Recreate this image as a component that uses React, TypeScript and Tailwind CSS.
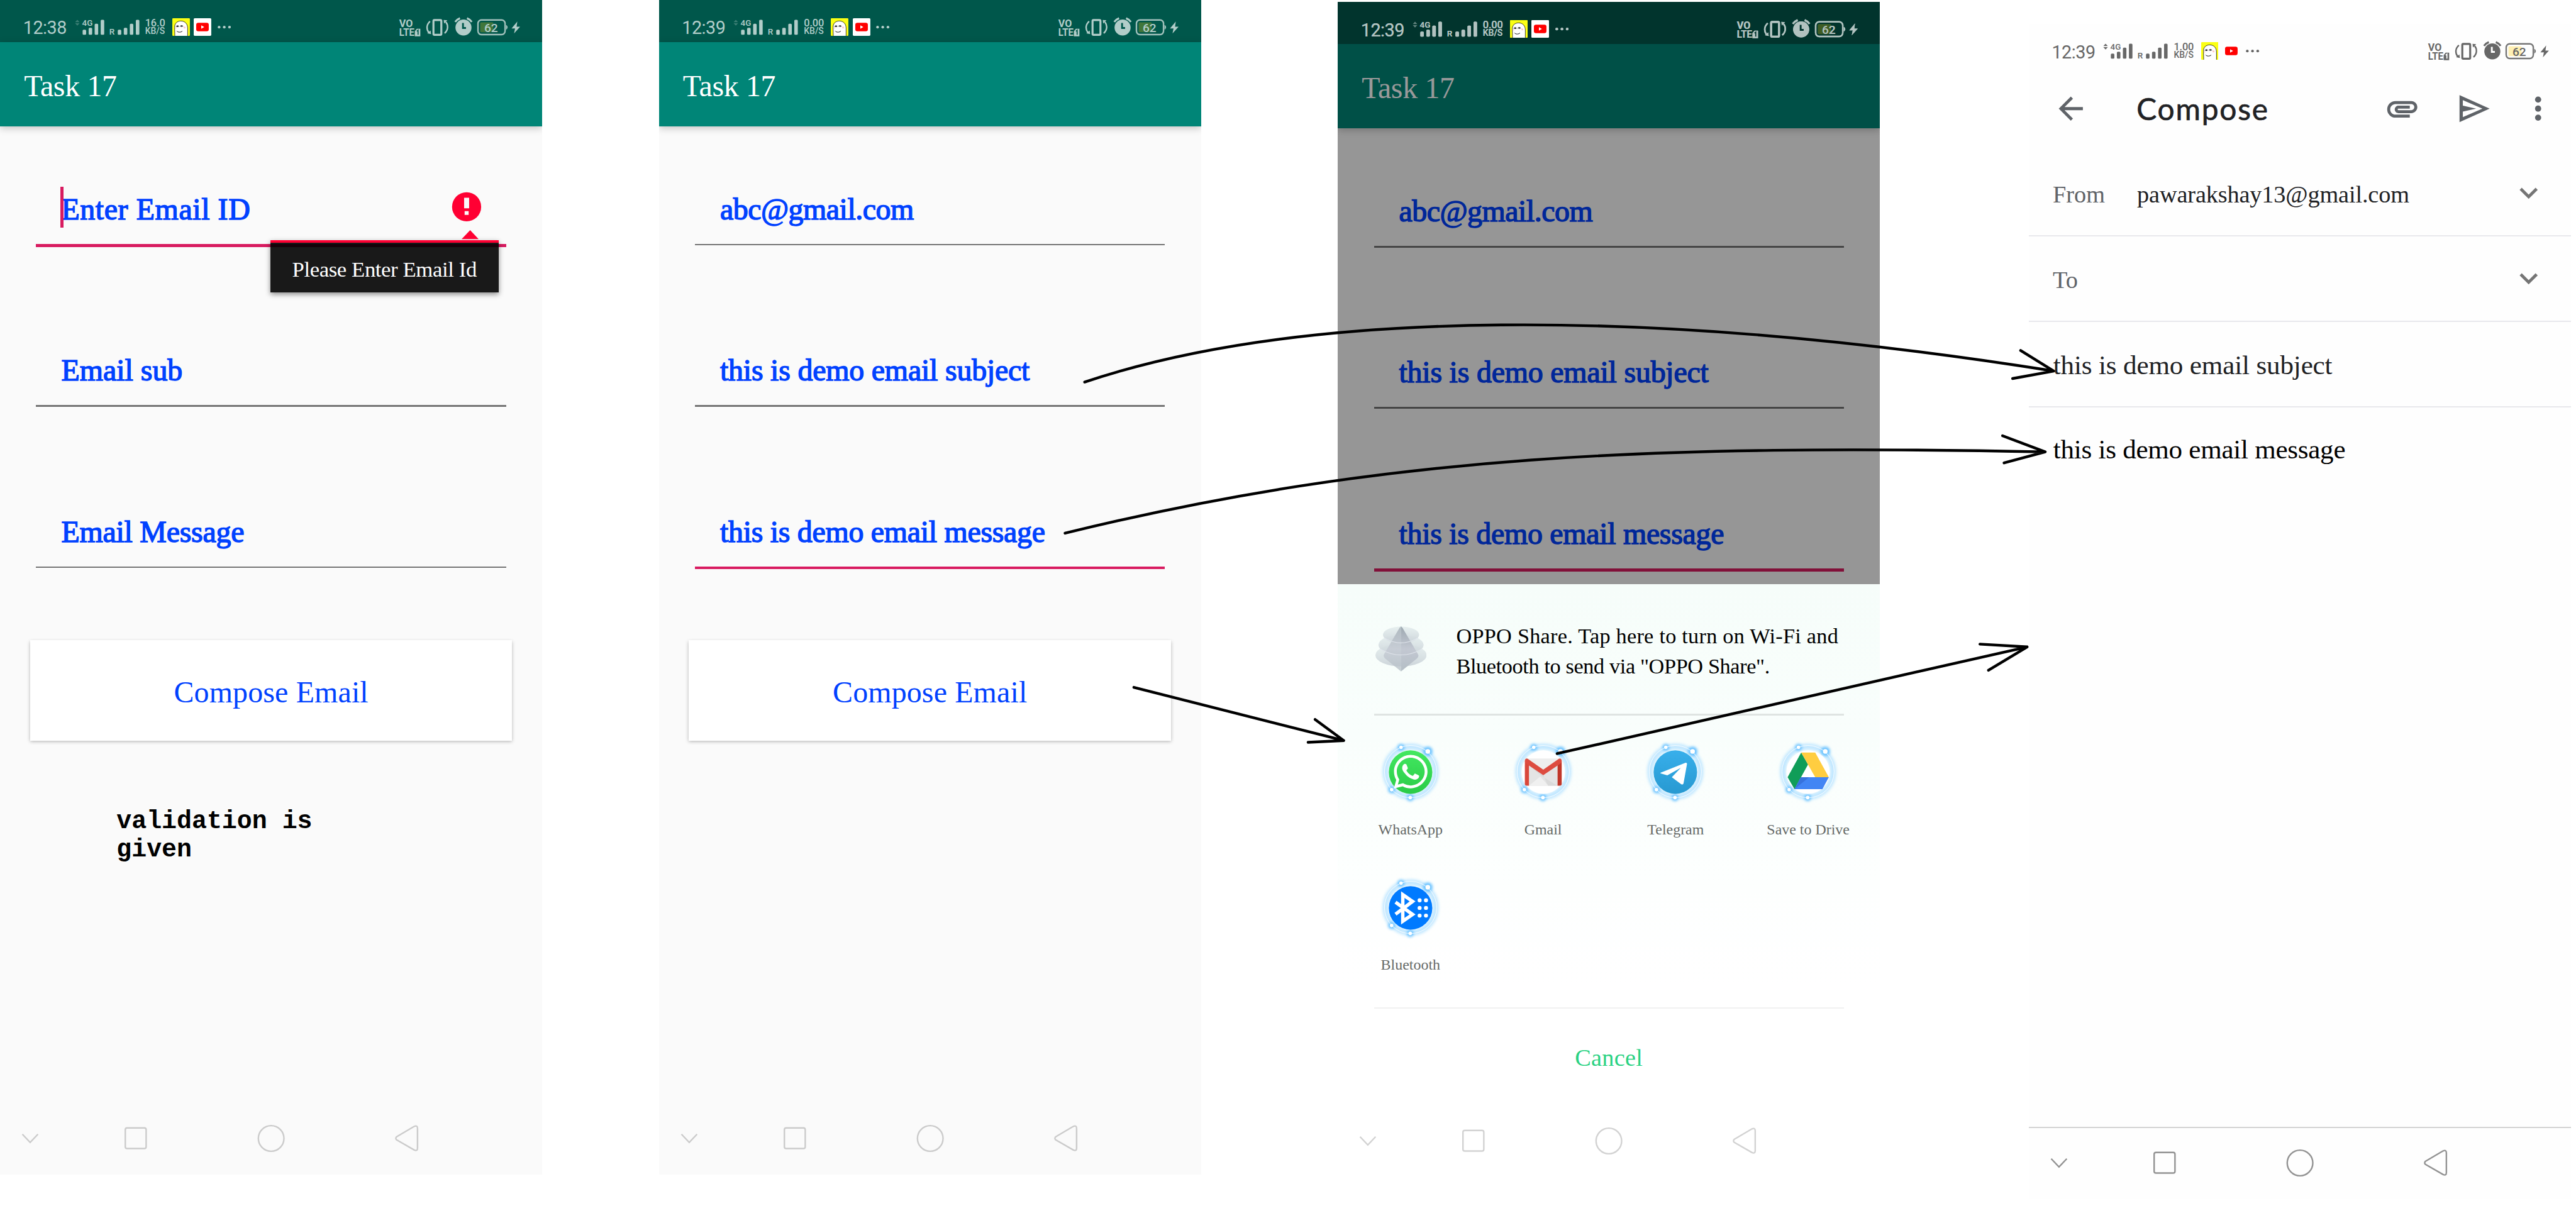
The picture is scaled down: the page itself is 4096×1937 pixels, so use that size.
import { type ReactNode } from "react";
import { FaWhatsapp } from "react-icons/fa";

function StatusBar({ time, speed, tone, hole, charge, arrows }: { time: string; speed: string; tone: string; hole: string; charge: string; arrows: number }) {
  const heights = [10, 14, 22, 30];
  return (
    <div className={`relative z-20 flex h-[84px] shrink-0 items-start pt-[36px] pr-[44px] pl-[46px] font-[Roboto,sans-serif] ${tone}`}>
      <div className="w-[100px] pt-[2px] text-[36px] leading-[36px] tracking-[-0.6px]">{time}</div>
      <svg viewBox="146 36 134 36" className="h-[36px] w-[134px] overflow-visible" fill="currentColor">
        <path d="M149 43.7L153.5 39L158 43.7ZM149 46L153.5 50.7L158 46Z" opacity={arrows} />
        <text x="163" y="51.3" fontSize="17" fontWeight="500" textLength="21" lengthAdjust="spacingAndGlyphs">4G</text>
        <text x="217" y="68.7" fontSize="17" fontWeight="500">R</text>
        {heights.map((h, i) => (
          <rect key={i} x={164 + i * 12} y={69 - h} width="7" height={h} rx="2" />
        ))}
        {heights.map((h, i) => (
          <rect key={i} x={234 + i * 12} y={69 - h} width="7" height={h} rx="2" />
        ))}
      </svg>
      <div className="ml-[9px] w-[54px] pt-[1px] font-medium">
        <div className="text-[20.5px] leading-[17px] tracking-[-0.2px]">{speed}</div>
        <div className="text-[17.5px] leading-[17px]">KB/S</div>
      </div>
      <svg viewBox="0 0 35 35" className="size-[35px]">
        <rect width="35" height="35" rx="1.5" fill="#fbff14" />
        <path d="M5 35L4.6 18C4.4 10 10 5.5 17 5.5C26 5.5 30.5 12 30.5 20V35" fill="#fff" stroke="#111" strokeWidth="1" />
        <path d="M7.5 17C8 14.5 12 14 13 16.5M15.5 16.5C16 14 20.5 14 21.5 16.5M9 25.5C11 28.5 17.5 28.5 20 25.5" fill="none" stroke="#111" strokeWidth="1.2" />
        <path d="M9 15.5h3v2h-3zM17 15h3v2h-3z" fill="#111" />
        <circle cx="24.5" cy="18.5" r="2" fill="#ffc9c9" />
        <circle cx="7" cy="19.5" r="1.3" fill="#ffc9c9" />
      </svg>
      <svg viewBox="0 0 35 35" className="ml-[8px] size-[35px]">
        <rect width="35" height="35" rx="2" fill="#fff" />
        <rect x="5" y="9" width="25" height="17" rx="4" fill="#f00" />
        <path d="M15 14L21 17.5L15 21Z" fill="#fff" />
      </svg>
      <svg viewBox="433 36 27 36" className="ml-[12px] h-[36px] w-[27px]" fill="currentColor">
        <circle cx="436" cy="53.7" r="2.7" />
        <circle cx="446.3" cy="53.7" r="2.7" />
        <circle cx="456.7" cy="53.7" r="2.7" />
      </svg>
      <svg viewBox="794 36 44 37" className="ml-auto h-[37px] w-[44px] overflow-visible" fill="currentColor">
        <text x="795" y="53" fontSize="20" fontWeight="700" textLength="27" lengthAdjust="spacingAndGlyphs">VO</text>
        <text x="795" y="71.7" fontSize="21" fontWeight="700" textLength="30" lengthAdjust="spacingAndGlyphs">LTE</text>
        <path d="M826 62L830 57H837V72H826Z" />
        <path d="M830.2 62L832.5 60V69" fill="none" stroke={hole} strokeWidth="2.2" />
      </svg>
      <svg viewBox="848 36 46 36" className="ml-[10px] h-[36px] w-[46px]" fill="none" stroke="currentColor">
        <rect x="863.3" y="39.7" width="15.7" height="29.3" rx="2" strokeWidth="4" />
        <path d="M856.5 42C849 49 849 58 854 64.5M885.5 66C893 59 893 50 888 43.5" strokeWidth="3" />
        <path d="M851 66L857.5 60.5L858.5 67.5ZM891 40L884.5 46.5L883.7 39.5Z" fill="currentColor" stroke="none" />
      </svg>
      <svg viewBox="903 34 40 38" className="-mt-[2px] ml-[9px] h-[38px] w-[40px]" fill="none" stroke="currentColor">
        <circle cx="923" cy="55" r="16" fill="currentColor" stroke="none" />
        <path d="M906.5 44C908.5 41 912 38 916 36.5M939.5 44C937.5 41 934 38 930 36.5" strokeWidth="4" />
        <path d="M922 46V56H928" stroke={hole} strokeWidth="3.6" />
      </svg>
      <svg viewBox="949 36 62 36" className="ml-[6px] h-[36px] w-[62px] overflow-visible" fill="none" stroke="currentColor">
        <rect x="951.5" y="39.5" width="54" height="29" rx="7" strokeWidth="3" opacity="0.9" />
        <path d="M1008 50Q1012 54 1008 58Z" fill="currentColor" strokeWidth="1" />
        <rect x="956" y="44" width="26" height="20" rx="2" fill={charge} stroke="none" />
        <text x="964" y="63.3" fontSize="24" fontWeight="500" fill="currentColor" stroke="none" textLength="27">62</text>
      </svg>
      <svg viewBox="1018 42 18 24" className="mt-[6px] ml-[7px] h-[24px] w-[18px]" fill="currentColor">
        <path d="M1030 42.3L1018.5 56H1025.500L1023.500 66L1035.500 52.500H1028.500Z" />
      </svg>
    </div>
  );
}

function NavBar({ tone }: { tone: string }) {
  return (
    <svg viewBox="0 2196 1080 144" className={`mt-auto h-[144px] w-full shrink-0 ${tone}`} fill="none" stroke="currentColor" strokeWidth="3">
      <path d="M44.500 2259.500L60 2276L75.500 2259.500" />
      <rect x="249.500" y="2247" width="41.500" height="41" rx="3.500" />
      <circle cx="540" cy="2268" r="25.500" />
      <path d="M790 2264.500L825 2244Q831.500 2241 831.500 2248V2287Q831.500 2294 825 2291L790 2271Q786.500 2268 790 2264.500Z" />
    </svg>
  );
}

function Field({ children, active, extra }: { children: ReactNode; active?: boolean; extra?: ReactNode }) {
  return (
    <div className="relative h-[146px] w-[936px]">
      <div className="flex h-[140px] items-center pt-[2px] pl-[50px] text-[60px] whitespace-nowrap text-[#0041ff] [-webkit-text-stroke-width:1.8px]">{children}</div>
      <div className={active ? "h-[6px] bg-[#d81b60]" : "h-[3px] bg-[#747474]"} />
      {extra}
    </div>
  );
}

function TaskScreen({ time, speed, fields, children, hole, charge }: { time: string; speed: string; fields: ReactNode; children?: ReactNode; hole: string; charge: string }) {
  return (
    <section className="relative flex h-[2340px] w-[1080px] shrink-0 flex-col overflow-hidden bg-[#fafafa]">
      <div className="bg-[#00574b]">
        <StatusBar time={time} speed={speed} tone="text-[#b2cdc9]" hole={hole} charge={charge} arrows={0.33} />
      </div>
      <header className="flex h-[168px] shrink-0 items-center bg-[#008577] pt-[6px] pl-[48px] text-[60px] tracking-[-0.4px] text-white shadow-[0_4px_14px_rgba(0,0,0,0.22)]">Task 17</header>
      <div className="mt-[94px] ml-[72px] flex flex-col gap-[175px]">{fields}</div>
      <button className="mt-[141px] ml-[60px] flex h-[201px] w-[960px] shrink-0 items-center justify-center bg-white pt-[8px] text-[60px] tracking-[0.2px] text-[#0041ff] shadow-[0_3px_7px_rgba(0,0,0,0.28)]">Compose Email</button>
      {children}
      <NavBar tone="text-[#cbcbcb]" />
    </section>
  );
}

function ErrorTip() {
  return (
    <>
      <div className="absolute top-[26px] left-[48px] h-[81px] w-[6px] bg-[#d81b60]" />
      <svg viewBox="-30 -30 60 60" className="absolute top-[36px] left-[827px] size-[60px]">
        <circle r="29" fill="#ff0033" />
        <path d="M-5 -18H5V3H-5ZM-4 8.500H4V16H-4Z" fill="#fafafa" />
      </svg>
      <div className="absolute top-[132px] left-[466px] flex h-[105px] w-[455px] items-center justify-center border-t-6 border-[#ff0033] bg-black/90 bg-clip-padding pt-[10px] text-[43.5px] tracking-[-0.5px] whitespace-nowrap text-white shadow-[0_4px_10px_rgba(0,0,0,0.45)]">
        Please Enter Email Id
        <svg viewBox="0 0 34 18" className="absolute -top-[24px] left-[381px] h-[18px] w-[34px]">
          <path d="M17 0L34 18H0Z" fill="#ff0033" />
        </svg>
      </div>
    </>
  );
}

function AppCell({ label, children }: { label: string; children: ReactNode }) {
  const beads = [
    [-19, -49.3, 3.5],
    [34.3, -41.3, 4.7],
    [-37.7, 35, 3.5],
    [-0.7, 50.7, 3.5],
  ];
  return (
    <div className="flex h-[270px] w-[264px] flex-col items-center pt-[48px]">
      <svg viewBox="-65 -65 130 130" className="size-[130px]">
        <g className="blur-[2.5px]">
          <circle cy="-1" r="50" fill="none" stroke="#c3e8ff" strokeWidth="12" />
          {beads.map(([x, y, r]) => (
            <circle key={x} cx={x} cy={y} r={r * 2} fill="#62bfff" />
          ))}
        </g>
        <circle cy="-1" r="52" fill="none" stroke="#fff" strokeWidth="1.1" />
        {beads.map(([x, y, r]) => (
          <circle key={x} cx={x} cy={y} r={r} fill="#fff" />
        ))}
        {children}
      </svg>
      <div className="mt-[31px] text-[30px] leading-[36px] whitespace-nowrap text-[#666a68]">{label}</div>
    </div>
  );
}

function ShareSheet() {
  return (
    <div className="absolute inset-x-0 top-[1160px] bottom-0 flex flex-col bg-[linear-gradient(180deg,#f6fdfa_0px,#f9fefc_300px,#fdfffe_600px,#ffffff_800px)]">
      <div className="flex h-[258px] shrink-0 items-center pl-[75px]">
        <svg viewBox="75 1245 102 90" className="h-[90px] w-[102px]">
          <defs>
            <linearGradient id="disc" x1="0" y1="0" x2="0" y2="1">
              <stop offset="0" stopColor="#dfe9ea" stopOpacity="0.7" />
              <stop offset="1" stopColor="#cdd5da" />
            </linearGradient>
            <linearGradient id="gem" x1="0" y1="0" x2="0" y2="1">
              <stop offset="0" stopColor="#9da8b0" />
              <stop offset="0.5" stopColor="#c3c8d2" />
              <stop offset="1" stopColor="#b4bec5" />
            </linearGradient>
          </defs>
          <ellipse cx="126" cy="1302.500" rx="51" ry="22.500" fill="url(#disc)" />
          <ellipse cx="126" cy="1282" rx="45" ry="20" fill="url(#disc)" />
          <ellipse cx="126" cy="1262" rx="36" ry="16.500" fill="url(#disc)" />
          <path d="M126 1245L123 1248L92 1301Q90 1305 94 1309L126 1335Z" fill="url(#gem)" opacity="0.75" />
          <path d="M126 1245L129 1248L160 1301Q162 1305 158 1309L126 1335Z" fill="url(#gem)" />
          <path d="M84 1290Q126 1314 168 1290M92 1268Q126 1288 160 1268" fill="none" stroke="#e5eaf0" strokeWidth="1.500" opacity="0.8" />
        </svg>
        <p className="ml-[59px] pt-[8px] text-[43px] leading-[60px] whitespace-nowrap text-black">
          <span className="tracking-[0.28px]">OPPO Share. Tap here to turn on Wi-Fi and</span>
          <br />
          <span className="tracking-[-0.5px]">Bluetooth to send via "OPPO Share".</span>
        </p>
      </div>
      <div className="mx-[72px] h-[3px] shrink-0 bg-[#dfe4e2]" />
      <div className="ml-[13px] grid w-[1056px] grid-cols-4">
        <AppCell label="WhatsApp">
          <defs>
            <linearGradient id="wa" x1="0" y1="0" x2="0" y2="1">
              <stop offset="0" stopColor="#43e861" />
              <stop offset="1" stopColor="#2acb47" />
            </linearGradient>
            <linearGradient id="tg" x1="0" y1="0" x2="0" y2="1">
              <stop offset="0" stopColor="#38afeb" />
              <stop offset="1" stopColor="#2799d1" />
            </linearGradient>
          </defs>
          <circle r="43.300" fill="url(#wa)" />
          <FaWhatsapp x="-38.1" y="-39" size={76.6} color="#ffffff" />
        </AppCell>
        <AppCell label="Gmail">
          <circle r="43.300" fill="#fff" />
          <path d="M-33 -27H33L36.700 27H-33Z" fill="#eeeeee" />
          <path d="M-28.500 -15L0 5.500L28.500 -15V27H-28.500Z" fill="#e4e4e4" />
          <path d="M-28.500 -13L0 5.500L9 27H28L-3 8Z" fill="#d3d3d3" opacity="0.6" />
          <path d="M-28.500 27L-6 9L10 27Z" fill="#f0f0f0" />
          <path d="M-36.700 -22L-28.500 -14V27H-33Q-36.700 27 -36.700 23Z" fill="#d9483b" />
          <path d="M36.700 -22L28.500 -14V27H33Q36.700 27 36.700 23Z" fill="#c1372a" />
          <path d="M-36.700 -22C-36.700 -27 -33 -28.500 -30 -26L0 -5L30 -26C33 -28.500 36.700 -27 36.700 -22Q36.700 -18.500 33 -16L0 6L-33 -16Q-36.700 -18.500 -36.700 -22Z" fill="#dd4c40" />
        </AppCell>
        <AppCell label="Telegram">
          <circle r="43.300" fill="url(#tg)" />
          <path d="M-29 1L19.500 -18.500C22 -19.500 24 -18 23 -15L16.500 21.500C16 25 13.500 25.500 11 23.500L-7 10L11 -8.500L-16 6.500L-28 3Q-31 2 -29 1Z" fill="#fff" />
        </AppCell>
        <AppCell label="Save to Drive">
          <circle r="43.300" fill="#fff" />
          <path d="M-13.600 -39L0 -15.300L-27 34L-40.700 10.300Z" fill="#109d58" />
          <path d="M-13.600 -39H14.300L41.400 10.300H14.300Z" fill="#ffcd40" />
          <path d="M-14.300 10.300H41.400L28.600 34H-27Z" fill="#4285f4" />
          <path d="M-14.300 10.300L2 10.300L-27 34Z" fill="#3772dd" />
        </AppCell>
        <AppCell label="Bluetooth">
          <circle r="43.300" fill="#007aff" />
          <path d="M-30 -11.500L4 13L-15.500 26.500V-26.500L4 -13L-30 12.500" fill="none" stroke="#fff" strokeWidth="6.800" strokeMiterlimit="6" />
          {[-15.3, 0, 15.3].map((y) => (
            <g key={y} fill="#fff">
              <circle cx="18" cy={y} r="4" />
              <circle cx="30.700" cy={y} r="4" />
            </g>
          ))}
        </AppCell>
      </div>
      <div className="mx-[72px] mt-[41px] h-[3px] shrink-0 bg-[#f1f1f1]" />
      <div className="mt-[69px] text-center text-[48px] leading-[60px] tracking-[0.3px] text-[#2bd283]">Cancel</div>
      <NavBar tone="text-[#d2d2d2]" />
    </div>
  );
}

function Expand() {
  return (
    <svg viewBox="0 0 24 24" className="mr-[48px] ml-auto size-[72px]" fill="#757575">
      <path d="M16.590 8.590L12 13.170L7.410 8.590L6 10L12 16L18 10Z" />
    </svg>
  );
}

function GmailScreen() {
  return (
    <section className="mt-[48px] ml-[296px] flex h-[2340px] w-[1080px] shrink-0 flex-col bg-[#fefefe] text-[48px]">
      <StatusBar time="12:39" speed="1.00" tone="text-[#676767]" hole="#ffffff" charge="#fff0b3" arrows={1} />
      <div className="flex h-[168px] shrink-0 items-center pl-[48px] text-[#5f6368]">
        <svg viewBox="0 0 24 24" className="size-[72px]" fill="currentColor">
          <path d="M20 11H7.830l5.590-5.590L12 4l-8 8 8 8 1.410-1.410L7.830 13H20v-2z" />
        </svg>
        <h1 className="w-[494px] pl-[95px] font-[Lato,sans-serif] text-[60px] tracking-[2.2px] text-[#202124] [-webkit-text-stroke-width:0.8px]">Compose</h1>
        <svg viewBox="0 0 24 24" className="ml-[94px] size-[72px]" fill="currentColor">
          <path d="M2 12.500C2 9.460 4.460 7 7.500 7H18c2.210 0 4 1.790 4 4s-1.790 4-4 4H9.500C8.120 15 7 13.880 7 12.500S8.120 10 9.500 10H17v2H9.410c-.55 0-.55 1 0 1H18c1.100 0 2-.9 2-2s-.9-2-2-2H7.500C5.570 9 4 10.570 4 12.500S5.570 16 7.500 16H17v2H7.500C4.460 18 2 15.540 2 12.500z" />
        </svg>
        <svg viewBox="0 0 24 24" className="ml-[72px] size-[72px]" fill="currentColor" fillRule="evenodd">
          <path d="M2 3L22 12L2 21ZM4.200 6.400V10L13 12L4.200 14V17.600L17.200 12Z" />
        </svg>
        <svg viewBox="0 0 24 24" className="ml-[54px] size-[72px]" fill="currentColor">
          <circle cx="12" cy="6" r="2.050" />
          <circle cx="12" cy="12" r="2.050" />
          <circle cx="12" cy="18" r="2.050" />
        </svg>
      </div>
      <div className="flex h-[171px] shrink-0 items-center border-b-3 border-[#e8e8ec] pl-[48px]">
        <span className="w-[168px] pt-[8px] text-[#5f6368]">From</span>
        <span className="pt-[8px] tracking-[-0.2px] text-[#202124]">pawarakshay13@gmail.com</span>
        <Expand />
      </div>
      <div className="flex h-[170px] shrink-0 items-center border-b-3 border-[#e8e8ec] pl-[48px]">
        <span className="pt-[6px] text-[#5f6368]">To</span>
        <Expand />
      </div>
      <div className="flex h-[170px] shrink-0 items-center border-b-3 border-[#e8e8ec] pt-[6px] pl-[49px] text-[54px] tracking-[-0.2px] text-[#202124]">this is demo email subject</div>
      <div className="flex h-[170px] shrink-0 items-center pl-[49px] text-[54px] tracking-[-0.35px] text-black">this is demo email message</div>
      <div className="mt-auto -mb-[3px] h-[3px] shrink-0 bg-[#d4d4d4]" />
      <div className="h-[144px] shrink-0">
        <NavBar tone="text-[#929292]" />
      </div>
    </section>
  );
}

function FilledFields() {
  return (
    <>
      <Field>
        <span className="tracking-[-0.6px]">abc@gmail.com</span>
      </Field>
      <Field>
        <span className="tracking-[-0.25px]">this is demo email subject</span>
      </Field>
      <Field active>
        <span className="tracking-[-0.35px]">this is demo email message</span>
      </Field>
    </>
  );
}

export default function App() {
  return (
    <main className="relative flex h-[2426px] w-[5130px] items-start overflow-hidden bg-white font-['Liberation_Serif',serif] [zoom:0.79844]">
      <TaskScreen
        time="12:38"
        speed="16.0"
        hole="#00574b"
        charge="#41763a"
        fields={
          <>
            <Field active extra={<ErrorTip />}>
              <span className="tracking-[0.75px]">Enter Email ID</span>
            </Field>
            <Field>Email sub</Field>
            <Field>
              <span className="tracking-[-0.3px]">Email Message</span>
            </Field>
          </>
        }
      >
        <p className="mt-[134px] ml-[232px] w-[420px] font-['Liberation_Mono',monospace] text-[50px] leading-[56px] font-bold text-black">validation is given</p>
      </TaskScreen>
      <div className="ml-[232px]">
        <TaskScreen time="12:39" speed="0.00" hole="#00574b" charge="#41763a" fields={<FilledFields />} />
      </div>
      <div className="relative mt-[4px] ml-[272px]">
        <TaskScreen time="12:39" speed="0.00" hole="#00574b" charge="#41763a" fields={<FilledFields />} />
        <div className="absolute inset-0 bg-black/40" />
        <div className="absolute inset-x-0 top-0 bg-[#01342d]">
          <StatusBar time="12:39" speed="0.00" tone="text-[#b2c2c0]" hole="#01342d" charge="#3f5c24" arrows={0.33} />
        </div>
        <ShareSheet />
      </div>
      <GmailScreen />
      <svg viewBox="0 0 5130 2426" className="pointer-events-none absolute inset-0 z-30 h-[2426px] w-[5130px]" fill="none" stroke="#000" strokeWidth="5.500" strokeLinecap="round" strokeLinejoin="round">
        <path d="M2160 761C2600 614 3290 612 4090 739M4024 698L4090 739L4008 754" />
        <path d="M2121 1062C2760 905 3300 885 4073 900M3988 868L4073 900L3991 922" />
        <path d="M2258 1369L2676 1475M2619 1433L2676 1475L2605 1478.600" />
        <path d="M3101 1501L4037 1288.500M3943 1283L4037 1288.500L3960 1335" />
      </svg>
    </main>
  );
}
